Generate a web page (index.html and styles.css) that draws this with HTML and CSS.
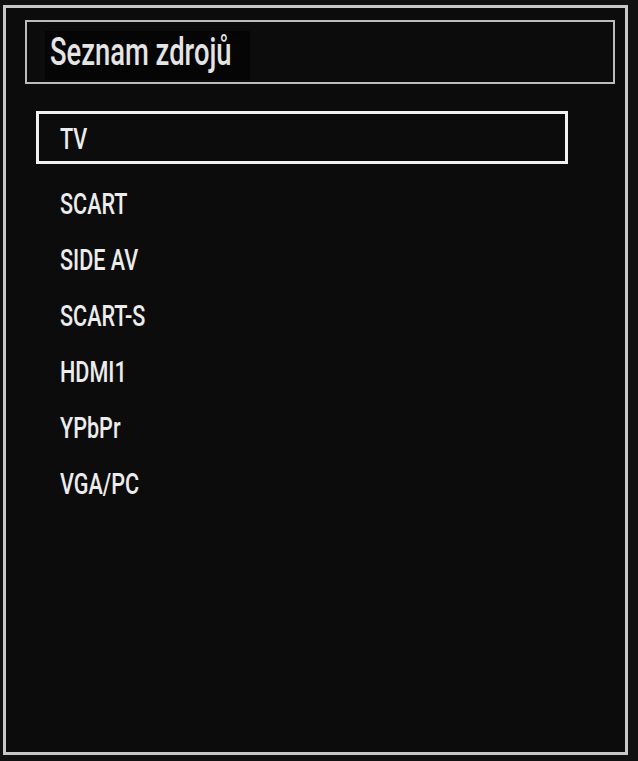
FILE: index.html
```html
<html>
<head>
	<meta charset="utf-8">
	<link rel="stylesheet" href="styles.css">
</head>
<body>
	<div class='panel'>
		<div class='title-bar'>
			<span class='title-bg'><span class='title'>Seznam zdrojů</span></span>
		</div>
		<ul class='sources'>
			<li class='source selected'><span class='label'>TV</span></li>
			<li class='source'><span class='label'>SCART</span></li>
			<li class='source'><span class='label'>SIDE AV</span></li>
			<li class='source'><span class='label'>SCART-S</span></li>
			<li class='source'><span class='label'>HDMI1</span></li>
			<li class='source'><span class='label'>YPbPr</span></li>
			<li class='source'><span class='label'>VGA/PC</span></li>
		</ul>
	</div>
</body>
</html>
```

FILE: styles.css
```css
		body {
			margin: 0;
			font-family: Roboto, 'Liberation Sans', sans-serif;
			color: #ececec;
			background-color: #111111;
		}

		/* outer frame of the menu */
		.panel {
			box-sizing: border-box;
			width: 625px;
			height: 750px;
			margin: 5px 0 0 3px;
			padding: 12px 10px 0 19px;
			border: 3px solid #c8c8c8;
			background-color: #0c0c0c;
		}

		.title-bar {
			box-sizing: border-box;
			height: 64px;
			padding-top: 9px;
			border: 2px solid #bcbcbc;
		}

		.title-bg {
			display: block;
			width: 200px;
			height: 49px;
			margin-left: 18px;
			padding-left: 5px;
			background-color: #050505;
		}

		.title {
			display: inline-block;
			font-size: 38px;
			font-weight: 500;
			line-height: 42px;
			color: #e4e4e4;
			white-space: nowrap;
			transform: scaleX(0.72);
			transform-origin: left;
		}

		.sources {
			list-style: none;
			width: 532px;
			margin: 27px 0 0 11px;
			padding: 0;
		}

		.source {
			height: 56px;
			line-height: 56px;
			padding-left: 24px;
			font-size: 30px;
			font-weight: 500;
		}

		.source.selected {
			box-sizing: border-box;
			height: 53px;
			margin-bottom: 12px;
			padding: 2px 0 0 21px;
			line-height: 45px;
			border: 3px solid #f2f2f2;
		}

		/* the tv font is very narrow */
		.label {
			display: inline-block;
			white-space: nowrap;
			transform: scaleX(0.72);
			transform-origin: left;
		}
```
